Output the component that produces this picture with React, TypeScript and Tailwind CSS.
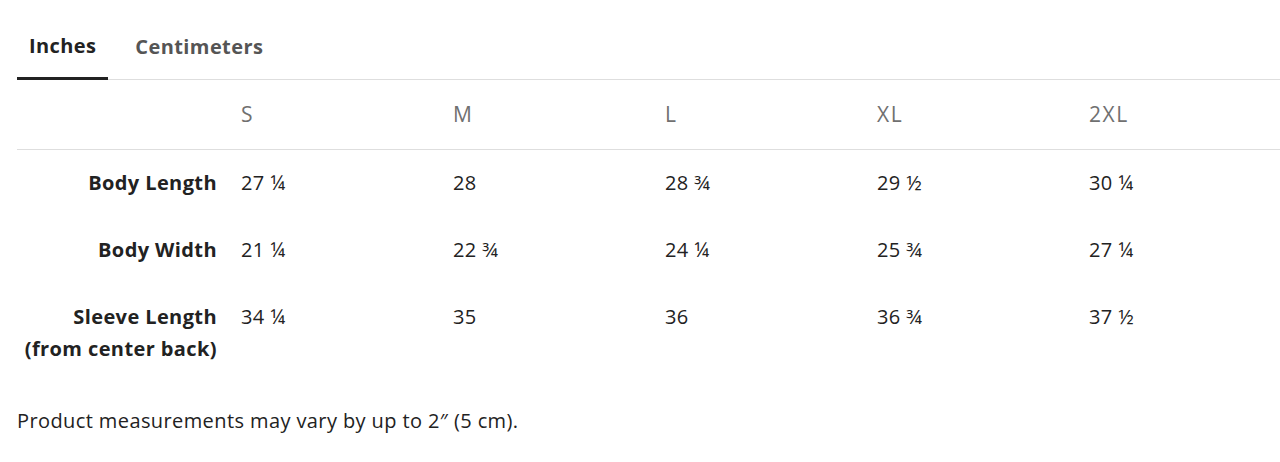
import React from "react";

const sizes = ["S", "M", "L", "XL", "2XL"];
const rows: { label: React.ReactNode; values: string[] }[] = [
  { label: "Body Length", values: ["27 ¼", "28", "28 ¾", "29 ½", "30 ¼"] },
  { label: "Body Width", values: ["21 ¼", "22 ¾", "24 ¼", "25 ¾", "27 ¼"] },
  {
    label: (
      <>
        Sleeve Length
        <br />
        (from center back)
      </>
    ),
    values: ["34 ¼", "35", "36", "36 ¾", "37 ½"],
  },
];

export default function App() {
  return (
    <div
      className="w-[1280px] h-[462px] bg-white overflow-hidden text-[#222] tracking-[0.4px]"
      style={{ fontFamily: "'Open Sans', sans-serif" }}
    >
      <div className="pl-[17px] pt-[20px]">
        <div className="flex items-end border-b border-[#dedede]">
          <div className="px-[12px] h-[60px] pb-[6px] flex items-center text-[20px] font-bold text-[#222] border-b-[3px] border-[#222] -mb-px">
            Inches
          </div>
          <div className="ml-[15px] px-[12px] h-[60px] pb-[6px] flex items-center text-[20px] font-bold text-[#555] -mb-px">
            Centimeters
          </div>
        </div>
        <div className="flex h-[70px] items-center border-b border-[#dedede] text-[21px] tracking-[1.5px] text-[#707070]">
          <div className="w-[212px] shrink-0" />
          {sizes.map((s) => (
            <div key={s} className="w-[212px] shrink-0 pl-[12px]">
              {s}
            </div>
          ))}
        </div>
        {rows.map((r, i) => (
          <div key={i} className="flex pt-[17px] pb-[18px] leading-[32px] text-[20px]">
            <div className="w-[212px] shrink-0 pr-[12px] text-right font-bold">
              {r.label}
            </div>
            {r.values.map((v, j) => (
              <div key={j} className="w-[212px] shrink-0 pl-[12px]">
                {v}
              </div>
            ))}
          </div>
        ))}
        <div className="mt-[23px] text-[20px] text-[#222]">
          Product measurements may vary by up to 2″ (5 cm).
        </div>
      </div>
    </div>
  );
}
